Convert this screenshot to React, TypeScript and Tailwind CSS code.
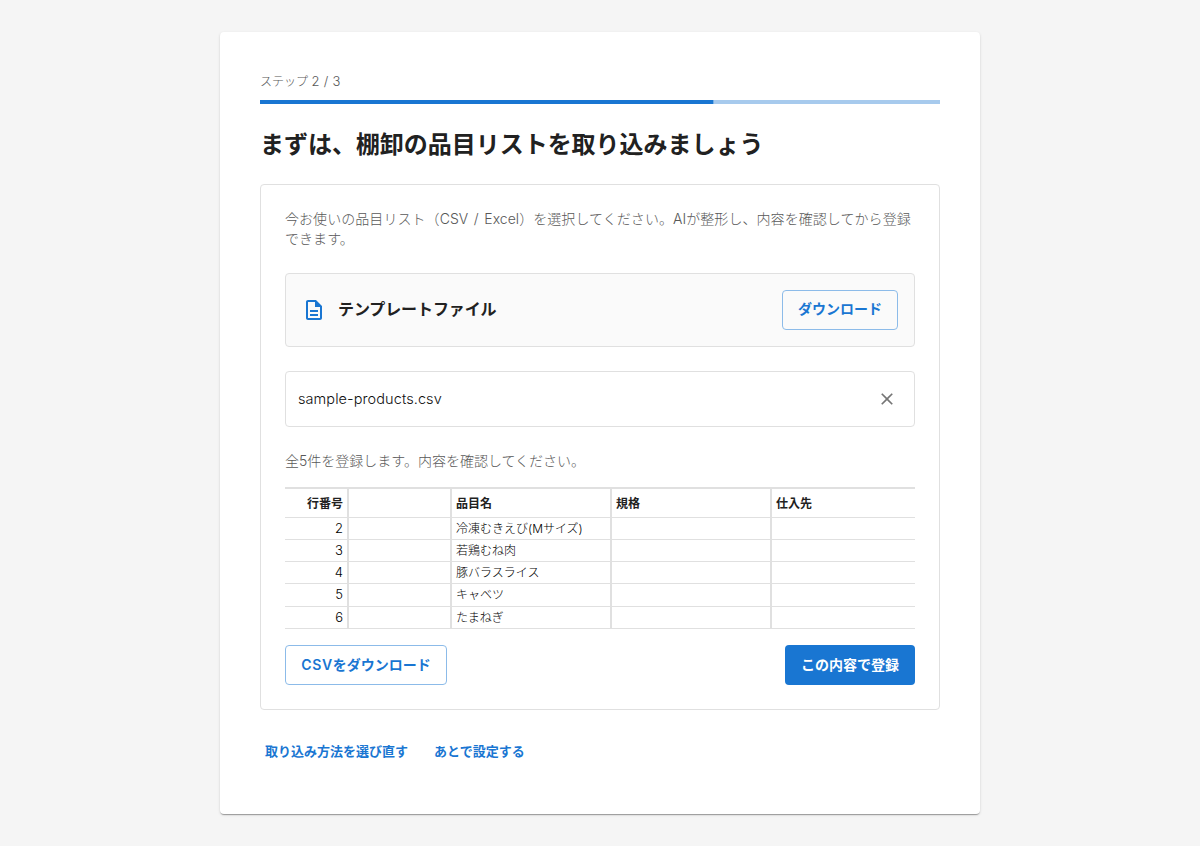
const rows = [
  { line: 2, name: "冷凍むきえび(Mサイズ)", height: "h-[22px]" },
  { line: 3, name: "若鶏むね肉", height: "h-[22px]" },
  { line: 4, name: "豚バラスライス", height: "h-[22px]" },
  { line: 5, name: "キャベツ", height: "h-[23px]" },
  { line: 6, name: "たまねぎ", height: "h-[22px]" },
];

const columns = "grid grid-cols-[64px_103px_160px_160px_1fr] border-b border-[#e0e0e0]";
const cell = "flex items-center border-r-2 border-[#e0e0e0] px-1";

export default function App() {
  return (
    <div className="flex h-[846px] justify-center bg-[#f5f5f5] py-8 font-['Inter','Noto_Sans_CJK_JP',sans-serif] font-light text-[#212121]" lang="ja">
      <main className="h-[782px] w-[760px] rounded bg-white px-10 pt-10 shadow-[0px_2px_1px_-1px_rgba(0,0,0,0.2),0px_1px_1px_0px_rgba(0,0,0,0.14),0px_1px_3px_0px_rgba(0,0,0,0.12)]">
        {/* Progress */}
        <p className="h-7 text-xs leading-[18px] text-[#585858]">
          ステップ <span className="text-[13px] tracking-[0.3px]">2 / 3</span>
        </p>
        <div className="h-1 bg-[#a7caed]">
          <div className="h-1 w-full origin-left scale-x-[0.66667] bg-[#1976d2]" />
        </div>

        <h1 className="mt-[25px] text-2xl leading-8 font-bold tracking-[-0.03px]">まずは、棚卸の品目リストを取り込みましょう</h1>

        <section className="mt-[23px] h-[526px] rounded border border-[#e0e0e0] px-6 pt-6">
          <p className="text-sm leading-5 tracking-[0.06px] text-[#585858] [word-spacing:1.5px]">
            今お使いの品目リスト（CSV / Excel）を選択してください。AIが整形し、内容を確認してから登録できます。
          </p>

          {/* Template file */}
          <div className="mt-6 flex h-[74px] items-center rounded border border-[#e0e0e0] bg-[#fafafa] px-4">
            <svg className="size-6 fill-[#1976d2]" viewBox="0 0 24 24">
              <path d="M8 16h8v2H8zm0-4h8v2H8zm6-10H6c-1.1 0-2 .9-2 2v16c0 1.1.89 2 1.99 2H18c1.1 0 2-.9 2-2V8zm4 18H6V4h7v5h5z" />
            </svg>
            <span className="ml-3 pb-0.5 text-base font-bold tracking-[-0.1px]">テンプレートファイル</span>
            <button className="ml-auto h-10 w-[116px] rounded border border-[#8cbbe9] pb-0.5 text-sm font-bold text-[#1976d2]">
              ダウンロード
            </button>
          </div>

          {/* Selected file */}
          <div className="mt-6 flex h-14 items-center justify-between rounded border border-[#e0e0e0] pr-[17px] pl-3">
            <span className="text-[14.5px] tracking-[0.08px] text-[#111]">sample-products.csv</span>
            <svg className="size-5 fill-[#757575]" viewBox="0 0 24 24">
              <path d="M19 6.41 17.59 5 12 10.59 6.41 5 5 6.41 10.59 12 5 17.59 6.41 19 12 13.41 17.59 19 19 17.59 13.41 12z" />
            </svg>
          </div>

          <p className="mt-6 text-sm leading-5 text-[#585858]">全5件を登録します。内容を確認してください。</p>

          {/* Preview table */}
          <div className="mt-4 border-t-2 border-[#e0e0e0] text-xs">
            <div className={`${columns} h-[29px] font-bold`}>
              <div className={`${cell} justify-end pt-0.5`}>行番号</div>
              <div className={cell} />
              <div className={`${cell} pt-0.5`}>品目名</div>
              <div className={`${cell} pt-0.5`}>規格</div>
              <div className="flex items-center px-1 pt-0.5">仕入先</div>
            </div>
            {rows.map((row) => (
              <div key={row.line} className={`${columns} ${row.height} text-black`}>
                <div className={`${cell} justify-end text-[13px]`}>{row.line}</div>
                <div className={cell} />
                <div className={cell}>{row.name}</div>
                <div className={cell} />
                <div />
              </div>
            ))}
          </div>

          <div className="mt-4 flex justify-between text-sm font-bold">
            <button className="h-10 w-[162px] rounded border border-[#8cbbe9] text-[#1976d2]">
              <span className="font-semibold tracking-[0.6px]">CSV</span>をダウンロード
            </button>
            <button className="h-10 w-[130px] rounded bg-[#1976d2] text-white">この内容で登録</button>
          </div>
        </section>

        <div className="mt-[31px] flex gap-[26px] pl-[5px] text-[13px] leading-5 font-bold text-[#1976d2]">
          <button>取り込み方法を選び直す</button>
          <button>あとで設定する</button>
        </div>
      </main>
    </div>
  );
}
